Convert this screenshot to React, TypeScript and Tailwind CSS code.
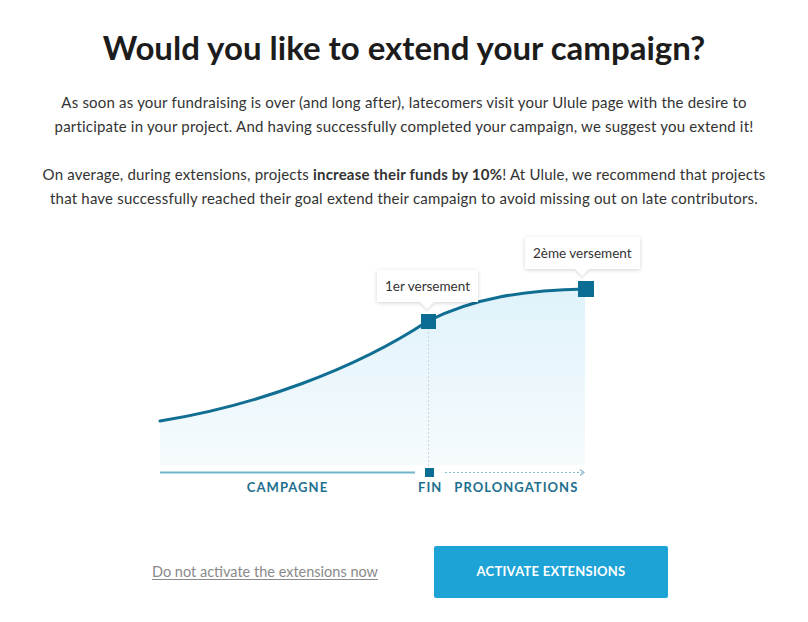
import React from 'react';

function Tooltip({ label, className }: { label: string; className: string }) {
  return (
    <div className={`absolute ${className}`}>
      <div className="relative bg-white px-[8px] h-[32px] flex items-center text-[13.5px] text-[#333] shadow-[0_1px_4px_rgba(0,0,0,0.18)] whitespace-nowrap">
        {label}
        <span className="absolute left-1/2 -bottom-[5px] -ml-[5px] w-[10px] h-[10px] bg-white rotate-45 shadow-[2px_2px_2px_rgba(0,0,0,0.08)]" />
      </div>
    </div>
  );
}

function ExtensionChart() {
  const curve = 'M6,191 C100,176 200,140 274,91 C320,68 370,60 431,59';
  return (
    <div className="relative w-[500px] mx-auto mt-[20px]">
      <svg width="500" height="249" viewBox="0 0 500 249" className="block">
        <defs>
          <linearGradient id="area" x1="0" y1="0" x2="0" y2="1">
            <stop offset="0%" stopColor="#dff2fa" />
            <stop offset="100%" stopColor="#f6fbfd" />
          </linearGradient>
        </defs>
        <path d={`${curve} L431,235 L6,235 Z`} fill="url(#area)" />
        <line x1="274.5" y1="98" x2="274.5" y2="238" stroke="#c9d6dc" strokeWidth="1" strokeDasharray="2 2" />
        <path d={curve} fill="none" stroke="#0f6e92" strokeWidth="3" strokeLinecap="round" />
        <rect x="267" y="84" width="15" height="15" fill="#0b6d93" />
        <rect x="424" y="51" width="16" height="16" fill="#0b6d93" />
        <line x1="6" y1="242.5" x2="261" y2="242.5" stroke="#73b3c9" strokeWidth="2" />
        <rect x="271" y="238" width="9" height="9" fill="#0b6d93" />
        <line x1="291" y1="242.5" x2="428" y2="242.5" stroke="#86bcd0" strokeWidth="1.2" strokeDasharray="2 2" />
        <path d="M426,239.5 L430,242.5 L426,245.5" fill="none" stroke="#86bcd0" strokeWidth="1.2" />
      </svg>
      <Tooltip label="1er versement" className="left-[223px] top-[40px]" />
      <Tooltip label="2ème versement" className="left-[371px] top-[7px]" />
      <div className="flex items-center text-[13px] leading-4 font-bold tracking-[0.08em] text-[#1c6f8e]">
        <div className="w-[255px] ml-[6px] text-center">CAMPAGNE</div>
        <div className="ml-[3px]">FIN</div>
        <div className="ml-[12px]">PROLONGATIONS</div>
      </div>
    </div>
  );
}

export default function App() {
  return (
    <div className="w-[808px] h-[622px] bg-white text-[#333] font-['Lato',sans-serif] pt-[28px]">
      <h1 className="text-center text-[33px] leading-[38px] font-bold text-[#1c1c1c]">
        Would you like to extend your campaign?
      </h1>
      <div className="mt-[24px] text-center text-[15px] tracking-[0.2px] leading-6">
        <p>
          As soon as your fundraising is over (and long after), latecomers visit your Ulule page with the desire to
          <br />
          participate in your project. And having successfully completed your campaign, we suggest you extend it!
        </p>
        <p className="mt-[24px]">
          On average, during extensions, projects <strong className="font-bold">increase their funds by 10%</strong>! At
          Ulule, we recommend that projects
          <br />
          that have successfully reached their goal extend their campaign to avoid missing out on late contributors.
        </p>
      </div>
      <ExtensionChart />
      <div className="mt-[51px] flex items-center justify-center gap-[56px] pl-[12px]">
        <a href="#" className="text-[14.5px] text-[#8a8a8a] underline underline-offset-2">
          Do not activate the extensions now
        </a>
        <button className="w-[234px] h-[52px] rounded-[2px] bg-[#1ea3d6] text-white text-[13px] font-bold tracking-[0.02em]">
          ACTIVATE EXTENSIONS
        </button>
      </div>
    </div>
  );
}
